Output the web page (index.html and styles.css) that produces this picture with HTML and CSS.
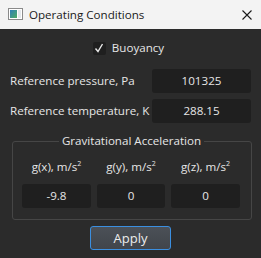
FILE: index.html
```html
<!DOCTYPE html>
<html lang="en">
<head>
  <meta charset="UTF-8">
  <title>Operating Conditions</title>
  <link rel="stylesheet" href="styles.css">
</head>
<body>
  <div class="window">
    <div class="titlebar">
      <svg class="app-icon" width="15" height="12" viewBox="0 0 15 12">
        <defs>
          <linearGradient id="pane" x1="0" y1="0" x2="1" y2="1">
            <stop offset="0" stop-color="#2f7fb8"/>
            <stop offset="1" stop-color="#4fae63"/>
          </linearGradient>
        </defs>
        <rect x="0.5" y="0.5" width="14" height="11" fill="#fff" stroke="#8a8a8a"/>
        <rect x="2" y="2" width="7" height="8" fill="url(#pane)"/>
        <rect x="10" y="2" width="3" height="8" fill="#e4e8ec"/>
      </svg>
      <span class="title">Operating Conditions</span>
      <svg class="close" width="10" height="10" viewBox="0 0 10 10">
        <path d="M0.5 0.5 L9.5 9.5 M9.5 0.5 L0.5 9.5" stroke="#1a1a1a" stroke-width="1.1"/>
      </svg>
    </div>

    <div class="content">
      <label class="check-row">
        <span class="checkbox">
          <svg width="10" height="10" viewBox="0 0 10 10">
            <path d="M1.5 5.5 L4 8.5 L8.5 1" fill="none" stroke="#e8e8e8" stroke-width="1.4"/>
          </svg>
        </span>
        Buoyancy
      </label>

      <div class="field-row">
        <span class="label">Reference pressure, Pa</span>
        <div class="value">101325</div>
      </div>
      <div class="field-row">
        <span class="label">Reference temperature, K</span>
        <div class="value">288.15</div>
      </div>

      <fieldset class="group">
        <legend>Gravitational Acceleration</legend>
        <div class="grav-grid">
          <span class="grav-label">g(x), m/s<sup>2</sup></span>
          <span class="grav-label">g(y), m/s<sup>2</sup></span>
          <span class="grav-label">g(z), m/s<sup>2</sup></span>
          <div class="value">-9.8</div>
          <div class="value">0</div>
          <div class="value">0</div>
        </div>
      </fieldset>

      <div class="actions">
        <button class="btn">Apply</button>
      </div>
    </div>
  </div>
</body>
</html>
```

FILE: styles.css
```css
html, body {
  margin: 0;
  padding: 0;
}
body {
  font-family: "Open Sans", "Noto Sans", sans-serif;
  font-size: 11.6px;
  line-height: 16px;
  background: #2b2b2b;
  color: #e6e6e6;
}
.window {
  width: 261px;
  height: 258px;
  display: flex;
  flex-direction: column;
}
.titlebar {
  height: 29px;
  flex: none;
  background: #f3f3f3;
  display: flex;
  align-items: center;
  padding: 0 9px 0 8px;
  color: #1a1a1a;
}
.app-icon {
  margin-top: -1px;
}
.title {
  margin-left: 6px;
  font-size: 11.6px;
  flex: 1;
}
.content {
  flex: 1;
  display: flex;
  flex-direction: column;
  padding: 10px 10px 0 10px;
}
.check-row {
  height: 18px;
  display: flex;
  align-items: center;
  justify-content: center;
  gap: 6px;
  padding-right: 4px;
}
.checkbox {
  width: 13px;
  height: 13px;
  background: #1f1f1f;
  border-radius: 2px;
  display: flex;
  align-items: center;
  justify-content: center;
}
.field-row {
  display: flex;
  align-items: center;
  justify-content: space-between;
  margin-top: 6px;
}
.check-row + .field-row {
  margin-top: 12px;
}
.label {
  white-space: nowrap;
}
.value {
  height: 24px;
  line-height: 24px;
  background: #1f1f1f;
  border-radius: 3px;
  text-align: center;
}
.field-row .value {
  width: 99px;
}
.group {
  margin: 10px 0 0 2px;
  width: 240px;
  box-sizing: border-box;
  border: 1px solid #464646;
  border-radius: 3px;
  padding: 9px 10px 11px 9px;
}
.group legend {
  margin: 0 auto;
  padding: 0 3px;
  line-height: 16px;
}
.grav-grid {
  display: grid;
  grid-template-columns: 69px 68px 69px;
  column-gap: 6px;
  row-gap: 8px;
  align-items: center;
}
.grav-label {
  text-align: center;
  line-height: 18px;
}
.grav-label sup {
  font-size: 7px;
  vertical-align: 5px;
  line-height: 0;
}
.actions {
  display: flex;
  justify-content: center;
  margin-top: 6px;
}
.btn {
  width: 81px;
  height: 24px;
  font-family: inherit;
  font-size: 13px;
  color: #ececec;
  background: linear-gradient(#4b5057, #41454b);
  border: 1px solid #3b8fe0;
  border-radius: 3px;
  padding: 0;
}
```
